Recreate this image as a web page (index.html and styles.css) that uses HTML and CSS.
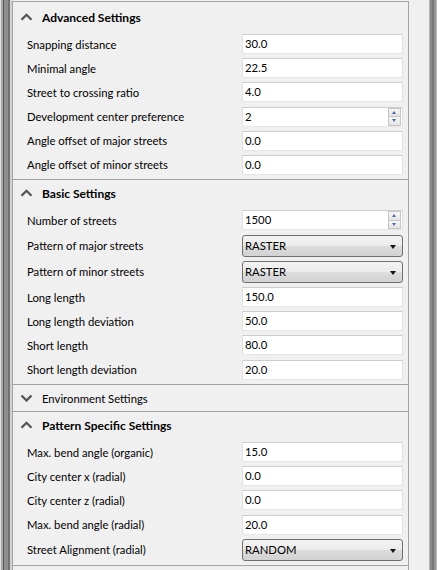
FILE: index.html
```html
<!DOCTYPE html>
<html>
<head>
<meta charset="utf-8">
<title>Settings</title>
<link rel="stylesheet" href="styles.css">
</head>
<body>
<div class="window">
  <div class="edge-left"></div>
  <div class="panel">
    <section class="group first">
      <div class="group-header">
        <svg class="chev" width="13" height="8" viewBox="0 0 13 8"><polyline points="1.5,6.8 6.5,1.8 11.5,6.8"/></svg>
        <span>Advanced Settings</span>
      </div>
      <div class="rows">
        <div class="row"><span class="label">Snapping distance</span><div class="edit">30.0</div></div>
        <div class="row"><span class="label">Minimal angle</span><div class="edit">22.5</div></div>
        <div class="row"><span class="label">Street to crossing ratio</span><div class="edit">4.0</div></div>
        <div class="row"><span class="label">Development center preference</span><div class="edit spin">2<div class="spin-btns"><span class="sb up"></span><span class="sb down"></span></div></div></div>
        <div class="row"><span class="label">Angle offset of major streets</span><div class="edit">0.0</div></div>
        <div class="row"><span class="label">Angle offset of minor streets</span><div class="edit">0.0</div></div>
      </div>
    </section>
    <section class="group">
      <div class="group-header">
        <svg class="chev" width="13" height="8" viewBox="0 0 13 8"><polyline points="1.5,6.8 6.5,1.8 11.5,6.8"/></svg>
        <span>Basic Settings</span>
      </div>
      <div class="rows">
        <div class="row"><span class="label">Number of streets</span><div class="edit spin">1500<div class="spin-btns"><span class="sb up"></span><span class="sb down"></span></div></div></div>
        <div class="row"><span class="label">Pattern of major streets</span><div class="combo">RASTER<span class="arrow"></span></div></div>
        <div class="row"><span class="label">Pattern of minor streets</span><div class="combo">RASTER<span class="arrow"></span></div></div>
        <div class="row"><span class="label">Long length</span><div class="edit">150.0</div></div>
        <div class="row"><span class="label">Long length deviation</span><div class="edit">50.0</div></div>
        <div class="row"><span class="label">Short length</span><div class="edit">80.0</div></div>
        <div class="row"><span class="label">Short length deviation</span><div class="edit">20.0</div></div>
      </div>
    </section>
    <section class="group">
      <div class="group-header collapsed">
        <svg class="chev" width="13" height="8" viewBox="0 0 13 8"><polyline points="1.5,1.5 6.5,6.5 11.5,1.5"/></svg>
        <span>Environment Settings</span>
      </div>
    </section>
    <section class="group">
      <div class="group-header">
        <svg class="chev" width="13" height="8" viewBox="0 0 13 8"><polyline points="1.5,6.8 6.5,1.8 11.5,6.8"/></svg>
        <span>Pattern Specific Settings</span>
      </div>
      <div class="rows">
        <div class="row"><span class="label">Max. bend angle (organic)</span><div class="edit">15.0</div></div>
        <div class="row"><span class="label">City center x (radial)</span><div class="edit">0.0</div></div>
        <div class="row"><span class="label">City center z (radial)</span><div class="edit">0.0</div></div>
        <div class="row"><span class="label">Max. bend angle (radial)</span><div class="edit">20.0</div></div>
        <div class="row"><span class="label">Street Alignment (radial)</span><div class="combo">RANDOM<span class="arrow"></span></div></div>
      </div>
    </section>
    <section class="group tail"></section>
  </div>
  <div class="gutter"></div>
  <div class="edge-right"></div>
</div>
</body>
</html>
```

FILE: styles.css
```css
html, body {
  margin: 0;
  padding: 0;
}
body {
  background: #f0f0f0;
  font-family: "Segoe UI", Lato, "Open Sans", sans-serif;
  font-size: 11.3px;
  color: #000;
}
.window {
  display: flex;
  height: 570px;
  overflow: hidden;
}
.edge-left {
  flex: none;
  width: 12px;
  background: linear-gradient(to right,
    #e4e4e4 0 1px, #a6a6a6 1px 3px, #5c5c5c 3px 4px,
    #8f8f8f 4px 8px, #727272 8px 10px, #d2d2d2 10px 12px);
}
.panel {
  flex: none;
  width: 397px;
  box-sizing: border-box;
  margin-top: 1px;
  border: 1px solid #a3a3a3;
  border-bottom: none;
}
.gutter {
  flex: none;
  width: 20px;
}
.edge-right {
  flex: none;
  width: 8px;
  background: linear-gradient(to right,
    #b4b4b4 0 1px, #8a8a8a 1px 3px, #7a7a7a 3px 5px, #969696 5px 7px, #b8b8b8 7px 8px);
}
.group + .group {
  border-top: 1px solid #a3a3a3;
}
.group.first {
  padding-top: 2px;
}
.group-header {
  display: flex;
  align-items: center;
  height: 26px;
  padding-left: 7px;
  font-weight: bold;
  font-size: 12px;
}
.group-header.collapsed {
  font-weight: normal;
  font-size: 11.3px;
}
.chev {
  flex: none;
  margin-right: 9px;
}
.chev polyline {
  fill: none;
  stroke: #555;
  stroke-width: 2.3;
}
.rows {
  display: flex;
  flex-direction: column;
  gap: 4.2px;
  padding: 4px 5px 4.5px 14px;
}
.row {
  display: grid;
  grid-template-columns: 1fr 161px;
  align-items: center;
}
.label {
  white-space: nowrap;
}
.edit {
  position: relative;
  height: 20px;
  box-sizing: border-box;
  background: #fff;
  border: 1px solid;
  border-color: #cdcdcd #e1e1e1 #e6e6e6 #e1e1e1;
  padding-left: 2px;
  line-height: 18px;
}
.spin-btns {
  position: absolute;
  right: 1px;
  top: 0;
  bottom: 0;
  width: 13px;
  display: flex;
  flex-direction: column;
}
.sb {
  flex: 1;
  position: relative;
  box-sizing: border-box;
  border: 1px solid #c6c6c6;
  background: linear-gradient(#f7f7f7, #e4e4e4);
}
.sb + .sb {
  border-top: none;
}
.sb::after {
  content: "";
  position: absolute;
  left: 3px;
  top: 2px;
  border-left: 2.5px solid transparent;
  border-right: 2.5px solid transparent;
}
.sb.up::after {
  border-bottom: 3px solid #4a69a6;
}
.sb.down::after {
  top: 2px;
  border-top: 3px solid #4a69a6;
}
.combo {
  position: relative;
  height: 22px;
  box-sizing: border-box;
  border: 1px solid #707070;
  border-radius: 3px;
  background: linear-gradient(#f3f3f3 0%, #ebebeb 50%, #dddddd 50%, #d2d2d2 100%);
  padding-left: 2px;
  line-height: 20px;
}
.arrow {
  position: absolute;
  right: 6px;
  top: 9px;
  border-left: 3px solid transparent;
  border-right: 3px solid transparent;
  border-top: 4px solid #111;
}
```
